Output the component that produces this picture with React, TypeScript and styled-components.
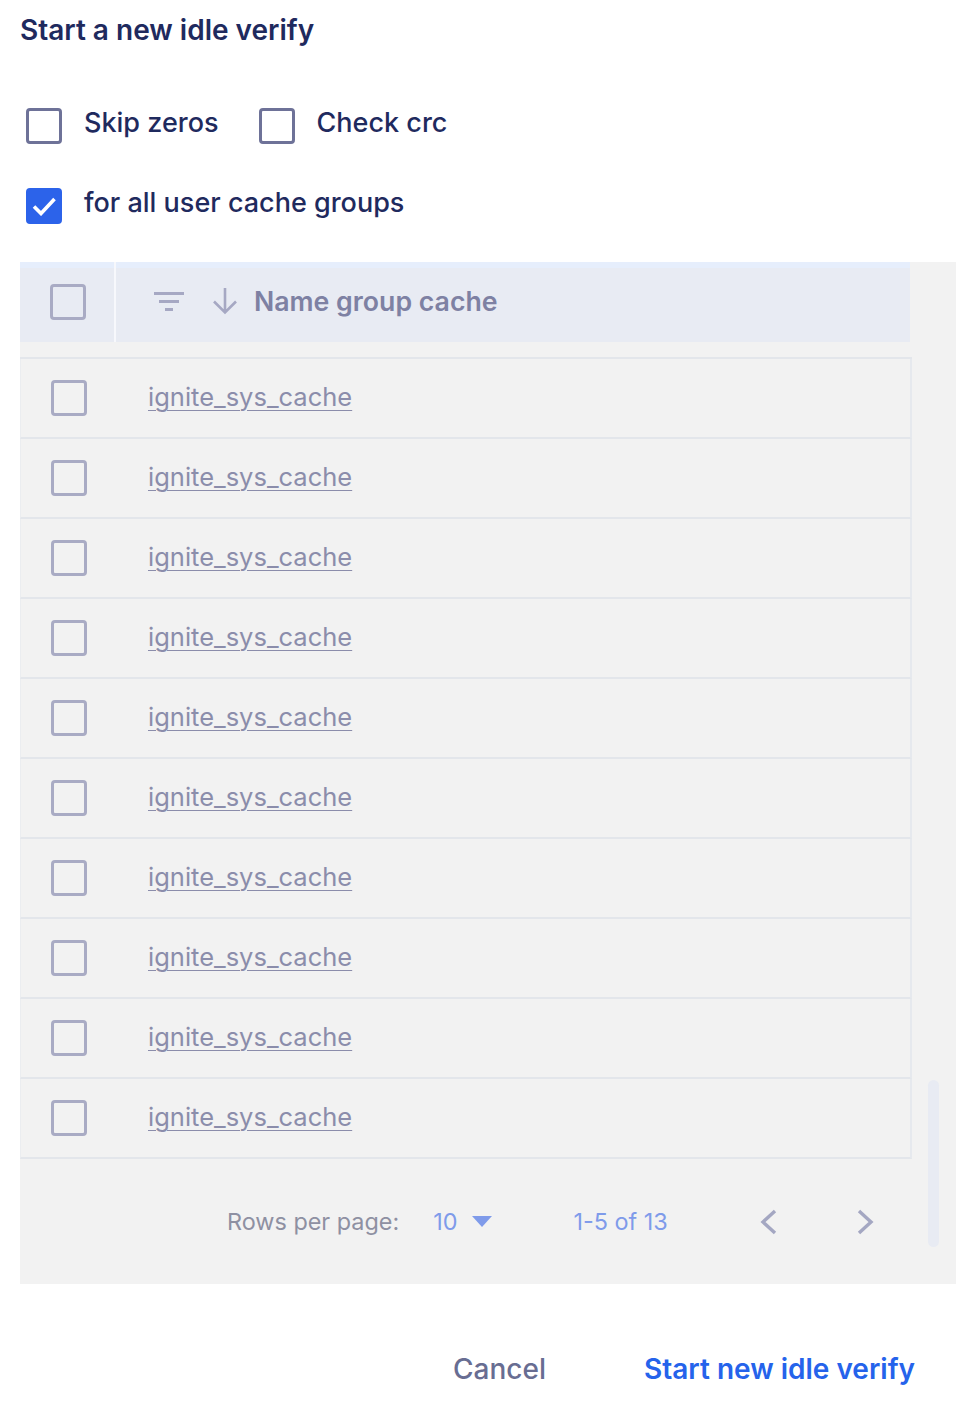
import React from 'react';
import styled, { createGlobalStyle } from 'styled-components';

const GlobalStyle = createGlobalStyle`
  html, body {
    margin: 0;
    padding: 0;
    background: #ffffff;
  }
  body {
    font-family: Inter, "Noto Sans", "Liberation Sans", sans-serif;
  }
  * {
    box-sizing: border-box;
  }
`;

const Page = styled.div`
  width: 972px;
  padding: 13px 16px 0 20px;
`;

const Title = styled.h2`
  margin: 0;
  font-size: 28px;
  line-height: 34px;
  font-weight: 600;
  color: #1f2a5e;
`;

const Options = styled.div`
  display: flex;
  flex-direction: column;
  gap: 44px;
  margin-top: 61px;
  padding-left: 6px;
`;

const OptionRow = styled.div`
  display: flex;
  align-items: center;
  gap: 40px;
`;

const Option = styled.label`
  display: flex;
  align-items: center;
  gap: 22px;
  font-size: 27px;
  line-height: 30px;
  font-weight: 500;
  color: #1f2a5e;
`;

const OptionText = styled.span`
  padding-bottom: 6px;
`;

const Box = styled.span<{ $checked?: boolean; $tone?: 'dark' | 'light' }>`
  width: 36px;
  height: 36px;
  flex: none;
  display: flex;
  align-items: center;
  justify-content: center;
  border-radius: 4px;
  border: 3px solid
    ${(p) => (p.$checked ? '#2c63ea' : p.$tone === 'light' ? '#a9abc4' : '#6e7298')};
  background: ${(p) => (p.$checked ? '#2c63ea' : 'transparent')};
`;

const Card = styled.div`
  position: relative;
  margin-top: 44px;
  width: 936px;
  background: #f2f2f2;
`;

const HeaderRow = styled.div`
  display: flex;
  width: 890px;
  height: 80px;
  margin-top: -6px;
  background: linear-gradient(#e6eefc 0 6px, #e8ebf3 6px);
`;

const CheckCell = styled.div<{ $divider?: boolean }>`
  width: 96px;
  flex: none;
  display: flex;
  align-items: center;
  padding-left: 30px;
  border-right: ${(p) => (p.$divider ? '2px solid #f7f8fc' : 'none')};
`;

const HeaderTitle = styled.div`
  display: flex;
  align-items: center;
  padding-left: 36px;
  padding-bottom: 2px;
  font-size: 26.7px;
  font-weight: 600;
  color: #7e81a3;
  svg {
    flex: none;
  }
`;

const Body = styled.div`
  margin-top: 15px;
  width: 892px;
  border-top: 2px solid #e3e6eb;
`;

const Row = styled.div`
  display: flex;
  height: 80px;
  border-bottom: 2px solid #e3e6eb;
  border-right: 2px solid #e6e9ee;
  border-left: 1px solid #ebedf0;
`;

const NameLink = styled.a`
  display: flex;
  align-items: center;
  padding-left: 31px;
  padding-bottom: 4px;
  font-size: 25.5px;
  color: #8b8dab;
  text-decoration: underline;
  text-decoration-thickness: 1px;
  text-underline-offset: 4px;
`;

const Pagination = styled.div`
  display: flex;
  align-items: center;
  height: 125px;
  padding-left: 207px;
  font-size: 23.4px;
`;

const PageLabel = styled.span`
  color: #8e90a2;
`;

const PageSelect = styled.span`
  display: flex;
  align-items: center;
  gap: 15px;
  margin-left: 34px;
  color: #7f9bea;
`;

const PageRange = styled.span`
  margin-left: 81px;
  color: #7f9bea;
`;

const Nav = styled.span`
  display: flex;
  align-items: center;
  gap: 78px;
  margin-left: 92px;
`;

const Scrollbar = styled.div`
  position: absolute;
  top: 818px;
  right: 17px;
  width: 11px;
  height: 167px;
  border-radius: 6px;
  background: #e8ebf3;
`;

const Actions = styled.div`
  display: flex;
  justify-content: flex-end;
  align-items: center;
  gap: 98px;
  height: 170px;
  padding-right: 41px;
`;

const ActionButton = styled.button<{ $primary?: boolean }>`
  border: none;
  background: none;
  padding: 0;
  font-family: inherit;
  font-size: 28px;
  font-weight: ${(p) => (p.$primary ? 600 : 500)};
  color: ${(p) => (p.$primary ? '#2563eb' : '#686d92')};
  cursor: pointer;
`;

const Tick = () => (
  <svg width="26" height="20" viewBox="0 0 26 20">
    <path d="M3 10.5l7 7L23.5 3" fill="none" stroke="#fff" strokeWidth="3.6" />
  </svg>
);

const FilterIcon = () => (
  <svg width="34" height="24" viewBox="0 0 34 24">
    <g stroke="#a6a8c3" strokeWidth="3">
      <path d="M2 4.5h30M7 12.5h20M13 20.5h8" />
    </g>
  </svg>
);

const ArrowDown = () => (
  <svg width="30" height="30" viewBox="0 0 30 30" style={{ marginLeft: 24, marginRight: 14 }}>
    <path d="M15 2v24M4 15.5l11 11 11-11" fill="none" stroke="#a6a8c3" strokeWidth="2.6" />
  </svg>
);

const Caret = () => (
  <svg width="20" height="11" viewBox="0 0 20 11">
    <path d="M0 0h20L10 11z" fill="#7f9bea" />
  </svg>
);

const Chevron = ({ dir }: { dir: 'left' | 'right' }) => (
  <svg width="18" height="26" viewBox="0 0 18 26">
    <path
      d={dir === 'left' ? 'M15 2L3 13l12 11' : 'M3 2l12 11L3 24'}
      fill="none"
      stroke="#a4a7c2"
      strokeWidth="3.4"
    />
  </svg>
);

const rows = Array.from({ length: 10 }, (_, i) => i);

export default function App() {
  return (
    <>
      <GlobalStyle />
      <Page>
        <Title>Start a new idle verify</Title>
        <Options>
          <OptionRow>
            <Option>
              <Box />
              <OptionText>Skip zeros</OptionText>
            </Option>
            <Option>
              <Box />
              <OptionText>Check crc</OptionText>
            </Option>
          </OptionRow>
          <OptionRow>
            <Option>
              <Box $checked>
                <Tick />
              </Box>
              <OptionText>for all user cache groups</OptionText>
            </Option>
          </OptionRow>
        </Options>

        <Card>
          <HeaderRow>
            <CheckCell $divider>
              <Box $tone="light" />
            </CheckCell>
            <HeaderTitle>
              <FilterIcon />
              <ArrowDown />
              Name group cache
            </HeaderTitle>
          </HeaderRow>
          <Body>
            {rows.map((i) => (
              <Row key={i}>
                <CheckCell>
                  <Box $tone="light" />
                </CheckCell>
                <NameLink>ignite_sys_cache</NameLink>
              </Row>
            ))}
          </Body>
          <Pagination>
            <PageLabel>Rows per page:</PageLabel>
            <PageSelect>
              10
              <Caret />
            </PageSelect>
            <PageRange>1-5 of 13</PageRange>
            <Nav>
              <Chevron dir="left" />
              <Chevron dir="right" />
            </Nav>
          </Pagination>
          <Scrollbar />
        </Card>

        <Actions>
          <ActionButton>Cancel</ActionButton>
          <ActionButton $primary>Start new idle verify</ActionButton>
        </Actions>
      </Page>
    </>
  );
}
